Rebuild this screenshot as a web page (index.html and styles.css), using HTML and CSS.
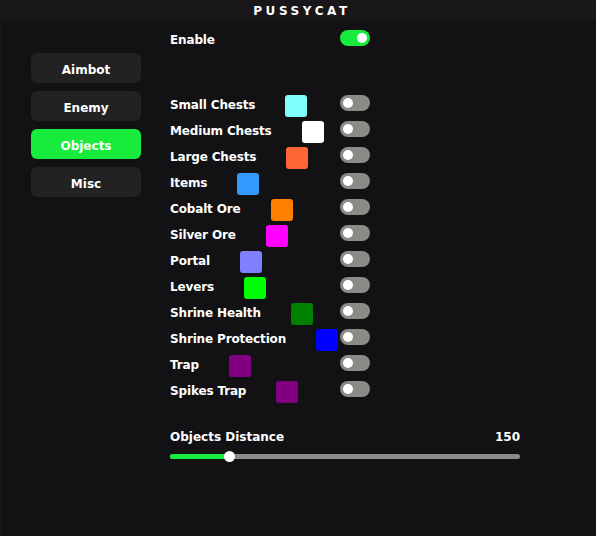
FILE: index.html
```html
<!DOCTYPE html>
<html lang="en">
<head>
<meta charset="UTF-8">
<title>PUSSYCAT</title>
<link rel="stylesheet" href="styles.css">
</head>
<body>

<div class="titlebar">PUSSYCAT</div>

<div class="window">
  <div class="sidebar">
    <button class="tab">Aimbot</button>
    <button class="tab">Enemy</button>
    <button class="tab active">Objects</button>
    <button class="tab">Misc</button>
  </div>

  <div class="content">
    <div class="row enable-row">
      <div class="label"><span>Enable</span></div>
      <span class="toggle on"></span>
    </div>

    <div class="list">
      <div class="row"><div class="label"><span>Small Chests</span><i class="swatch" style="background:#80ffff"></i></div><span class="toggle"></span></div>
      <div class="row"><div class="label"><span>Medium Chests</span><i class="swatch" style="background:#ffffff"></i></div><span class="toggle"></span></div>
      <div class="row"><div class="label"><span>Large Chests</span><i class="swatch" style="background:#ff6633"></i></div><span class="toggle"></span></div>
      <div class="row"><div class="label"><span>Items</span><i class="swatch" style="background:#3399ff"></i></div><span class="toggle"></span></div>
      <div class="row"><div class="label"><span>Cobalt Ore</span><i class="swatch" style="background:#ff8000"></i></div><span class="toggle"></span></div>
      <div class="row"><div class="label"><span>Silver Ore</span><i class="swatch" style="background:#ff00ff"></i></div><span class="toggle"></span></div>
      <div class="row"><div class="label"><span>Portal</span><i class="swatch" style="background:#8080ff"></i></div><span class="toggle"></span></div>
      <div class="row"><div class="label"><span>Levers</span><i class="swatch" style="background:#00ff00"></i></div><span class="toggle"></span></div>
      <div class="row"><div class="label"><span>Shrine Health</span><i class="swatch" style="background:#008000"></i></div><span class="toggle"></span></div>
      <div class="row"><div class="label"><span>Shrine Protection</span><i class="swatch" style="background:#0000ff"></i></div><span class="toggle"></span></div>
      <div class="row"><div class="label"><span>Trap</span><i class="swatch" style="background:#800080"></i></div><span class="toggle"></span></div>
      <div class="row"><div class="label"><span>Spikes Trap</span><i class="swatch" style="background:#800080"></i></div><span class="toggle"></span></div>
    </div>

    <div class="slider">
      <div class="slider-head"><span>Objects Distance</span><span>150</span></div>
      <div class="track">
        <div class="fill" style="width:59px"></div>
        <div class="knob" style="left:59px"></div>
      </div>
    </div>
  </div>
</div>

</body>
</html>
```

FILE: styles.css
```css
html, body { margin: 0; height: 100%; }
body {
  background: #1c1412;
  font-family: "DejaVu Sans", Verdana, sans-serif;
  font-weight: bold;
  font-size: 12px;
  color: #ffffff;
  overflow: hidden;
}

.titlebar {
  height: 21px;
  line-height: 22px;
  background: #1a171b;
  text-align: center;
  letter-spacing: 3.6px;
  padding-left: 8px;
  font-size: 12px;
}

.window {
  display: flex;
  margin-left: 2px;
  height: 515px;
  background: #121214;
}

.sidebar {
  display: flex;
  flex-direction: column;
  gap: 8px;
  padding: 32px 0 0 29px;
  width: 110px;
}
.tab {
  height: 30px;
  border: none;
  border-radius: 6px;
  background: #222222;
  color: #ffffff;
  font: inherit;
  padding: 3px 0 0;
}
.tab.active { background: #17ec3d; }

.content {
  margin-left: 29px;
  padding-top: 9px;
  width: 350px;
}

.row {
  display: flex;
  align-items: flex-start;
  width: 200px;
  height: 26px;
  line-height: 16px;
}
.enable-row { height: 16px; margin-bottom: 49px; }
.label {
  flex: 1;
  min-width: 0;
  display: flex;
  align-items: flex-start;
  white-space: nowrap;
}
.label span { padding-top: 2px; letter-spacing: -0.15px; }
.swatch {
  display: block;
  flex: none;
  width: 22px;
  height: 22px;
  border-radius: 3px;
  margin-left: 30px;
}

.toggle {
  position: relative;
  width: 30px;
  height: 16px;
  border-radius: 8px;
  background: #8a8b87;
  flex: none;
}
.toggle::after {
  content: "";
  position: absolute;
  top: 3px;
  left: 3px;
  width: 10px;
  height: 10px;
  border-radius: 50%;
  background: #ffffff;
}
.toggle.on { background: #17ec3d; }
.toggle.on::after { left: auto; right: 3px; }

.slider { margin-top: 22px; }
.slider-head {
  display: flex;
  justify-content: space-between;
  line-height: 16px;
}
.track {
  position: relative;
  margin-top: 9px;
  height: 5px;
  border-radius: 3px;
  background: #8a8b87;
}
.fill {
  height: 100%;
  border-radius: 3px;
  background: #17ec3d;
}
.knob {
  position: absolute;
  top: -3px;
  width: 11px;
  height: 11px;
  margin-left: -5.5px;
  border-radius: 50%;
  background: #ffffff;
}
```
